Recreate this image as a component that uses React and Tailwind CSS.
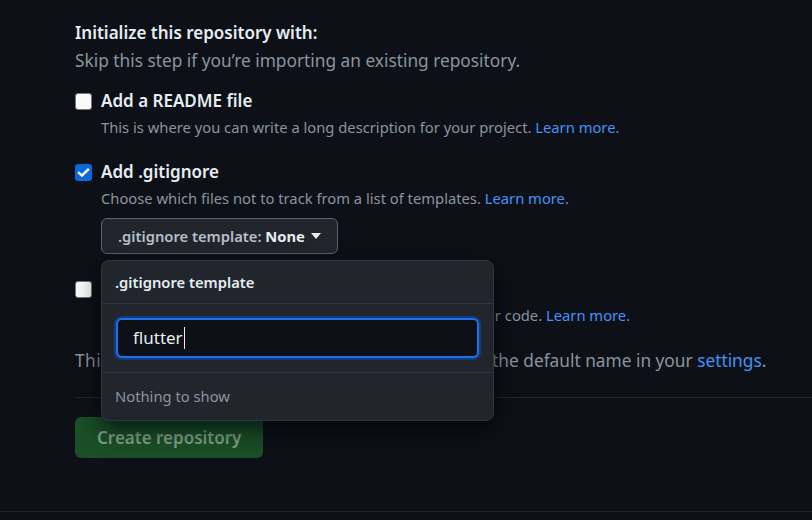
import React from 'react';

const fontStack = { fontFamily: '"Noto Sans", "Liberation Sans", sans-serif' };

const Checkbox = ({ checked }) =>
  checked ? (
    <span className="flex w-[17px] h-[17px] shrink-0 items-center justify-center rounded-[3px] bg-[#0969da]">
      <svg width="13" height="13" viewBox="0 0 16 16" fill="none">
        <path d="M2.5 8.5l3.6 3.4L13.5 4.5" stroke="#fff" strokeWidth="3" strokeLinecap="square" />
      </svg>
    </span>
  ) : (
    <span className="block w-[17px] h-[17px] shrink-0 rounded-[3px] border border-[#767676] bg-[#fafafa]" />
  );

const Link = ({ children }) => <span className="text-[#4493f8]">{children}</span>;

export default function App() {
  return (
    <div className="min-h-[520px] w-[812px] bg-[#0d1117] overflow-hidden" style={fontStack}>
      <div className="pl-[75px] pt-[21px]">
        <h3 className="text-[17px] leading-6 font-semibold text-[#e6edf3]">Initialize this repository with:</h3>
        <p className="mt-[4px] text-[17.3px] leading-6 text-[#8b949e]">Skip this step if you’re importing an existing repository.</p>

        {/* README */}
        <div className="mt-[16px] flex items-center">
          <Checkbox />
          <span className="ml-[9px] text-[17px] leading-6 font-semibold text-[#e6edf3]">Add a README file</span>
        </div>
        <p className="mt-[4px] pl-[26px] text-[14.75px] leading-5 text-[#8b949e]">
          This is where you can write a long description for your project. <Link>Learn more.</Link>
        </p>

        {/* gitignore */}
        <div className="mt-[23px] flex items-center">
          <Checkbox checked />
          <span className="ml-[9px] text-[17px] leading-6 font-semibold text-[#e6edf3]">Add .gitignore</span>
        </div>
        <p className="mt-[4px] pl-[26px] text-[14.75px] leading-5 text-[#8b949e]">
          Choose which files not to track from a list of templates. <Link>Learn more.</Link>
        </p>

        <div className="relative mt-[10px] pl-[26px]">
          <button className="flex h-[36px] items-center gap-[6px] rounded-[6px] border border-[#5b636d] bg-[#21262d] px-[16px] text-[14.75px] font-semibold text-[#b7bfc8]">
            <span>
              .gitignore template: <span className="font-bold text-[#e6edf3]">None</span>
            </span>
            <svg width="10" height="6" viewBox="0 0 10 6">
              <path d="M0 0h10L5 6z" fill="#e6edf3" />
            </svg>
          </button>

          {/* dropdown overlay */}
          <div className="absolute left-[26px] top-[42px] z-10 w-[393px] rounded-[8px] border border-[#30363d] bg-[#21262d] shadow-[0_8px_24px_rgba(1,4,9,0.75)]">
            <div className="flex h-[42px] items-center px-[13px] text-[14.75px] font-semibold text-[#e6edf3]">.gitignore template</div>
            <div className="border-t border-[#30363d] px-[14px] py-[14px]">
              <div className="flex h-[40px] items-center rounded-[6px] border-2 border-[#1f6feb] bg-[#0d1117] px-[15px] shadow-[0_0_0_2px_#133d7a] text-[17px] text-[#e6edf3]">
                flutter
                <span className="ml-[1px] h-[22px] w-px bg-[#e6edf3]" />
              </div>
            </div>
            <div className="flex h-[48px] items-center border-t border-[#30363d] px-[13px] text-[14.75px] text-[#8b949e]">Nothing to show</div>
          </div>
        </div>

        {/* license (behind overlay) */}
        <div className="mt-[23px] flex items-center">
          <Checkbox />
          <span className="ml-[9px] text-[17px] leading-6 font-semibold text-[#e6edf3]">Choose a license</span>
        </div>
        <p className="mt-[4px] pl-[26px] text-[14.75px] leading-5 text-[#8b949e]">
          A license tells others what they can and can't do with your code. <Link>Learn more.</Link>
        </p>

        <p className="mt-[24px] text-[17.3px] leading-6 text-[#8b949e]">
          <span className="tracking-[0.5px]">
            This will set <span className="font-semibold text-[#e6edf3]">main</span> as the default branch. Change
          </span>{' '}
          the default name in your <Link>settings</Link>.
        </p>

        <div className="mt-[24px] border-t border-[#21262d]" />

        <button className="mt-[19px] h-[41px] rounded-[6px] bg-[#1a4f27] px-[22px] text-[17px] font-semibold text-[#81a188]">
          Create repository
        </button>
      </div>
      <div className="mt-[53px] border-t border-[#21262d]" />
    </div>
  );
}
